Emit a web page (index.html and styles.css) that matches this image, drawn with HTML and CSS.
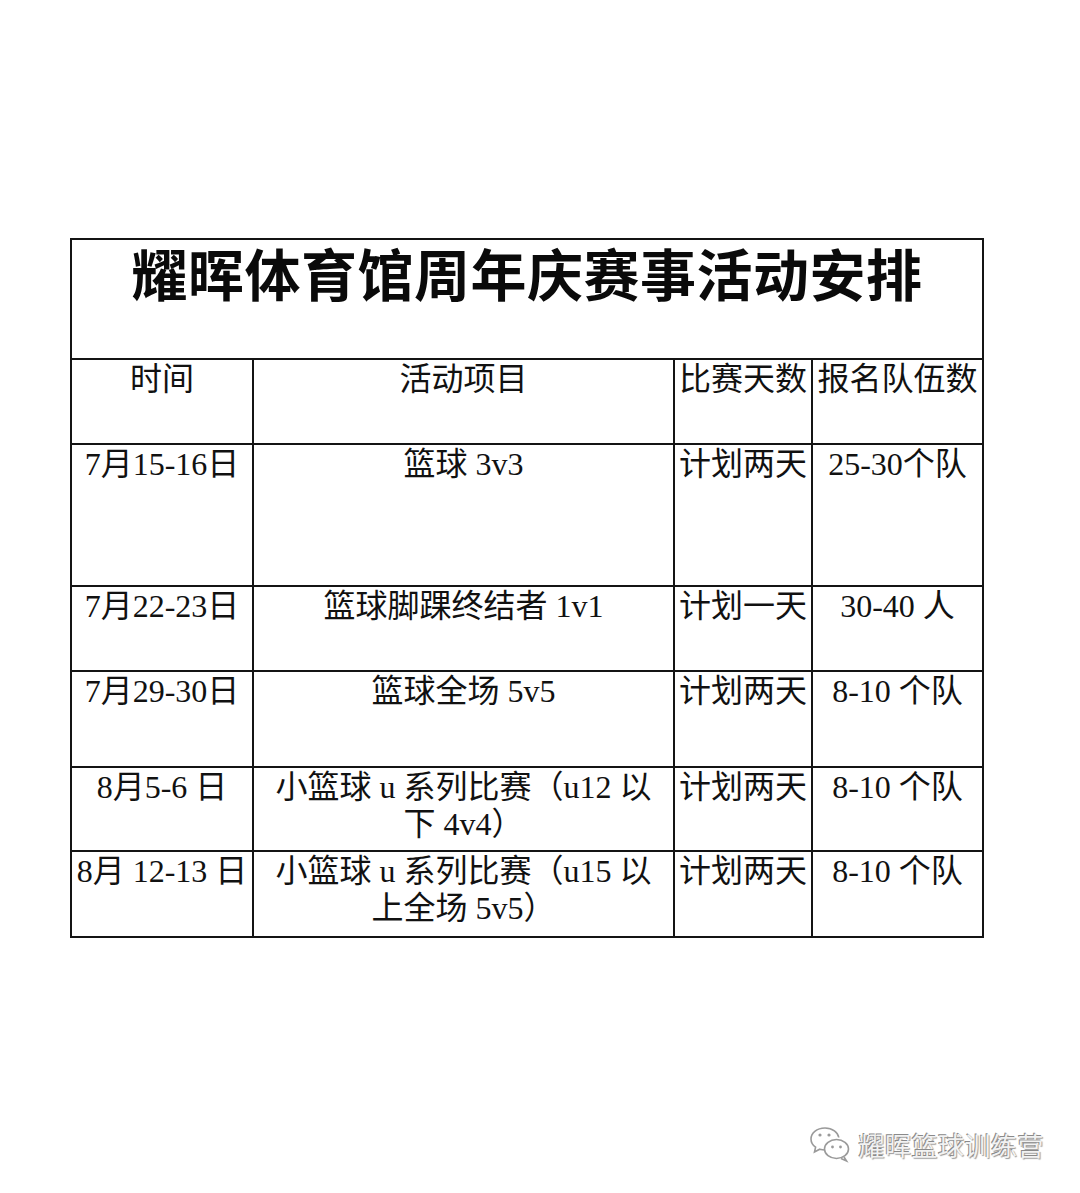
FILE: index.html
```html
<!DOCTYPE html>
<html lang="zh">
<head>
<meta charset="utf-8">
<link rel="stylesheet" href="styles.css">
</head>
<body>
<div class="page">
  <table class="schedule">
    <colgroup>
      <col class="c1"><col class="c2"><col class="c3"><col class="c4">
    </colgroup>
    <tr class="r-title"><td colspan="4" class="title">耀晖体育馆周年庆赛事活动安排</td></tr>
    <tr class="r-head"><td>时间</td><td>活动项目</td><td class="tight">比赛天数</td><td class="tight">报名队伍数</td></tr>
    <tr class="r1"><td>7月15-16日</td><td>篮球 3v3</td><td class="tight">计划两天</td><td>25-30个队</td></tr>
    <tr class="r2"><td>7月22-23日</td><td>篮球脚踝终结者 1v1</td><td class="tight">计划一天</td><td>30-40 人</td></tr>
    <tr class="r3"><td>7月29-30日</td><td>篮球全场 5v5</td><td class="tight">计划两天</td><td>8-10 个队</td></tr>
    <tr class="r4"><td>8月5-6 日</td><td>小篮球 u 系列比赛（u12 以<br>下 4v4）</td><td class="tight">计划两天</td><td>8-10 个队</td></tr>
    <tr class="r5"><td class="tight">8月 12-13 日</td><td>小篮球 u 系列比赛（u15 以<br>上全场 5v5）</td><td class="tight">计划两天</td><td>8-10 个队</td></tr>
  </table>
  <div class="mark">
    <svg class="wx" width="44" height="38" viewBox="0 0 44 38">
      <g fill="none" stroke="#9a9a9a" stroke-width="1.6">
        <path d="M17 3C8.5 3 3 8.3 3 14c0 3.3 1.8 6.2 4.6 8.2L6.5 27l5.2-2.8c1.7.5 3.5.8 5.3.8"/>
        <path d="M17 3c7.5 0 13 4.3 13.8 9.5"/>
        <ellipse cx="28.5" cy="24" rx="12" ry="9.5"/>
        <path d="M36 32l2.5 4-5.5-2.5"/>
      </g>
      <g fill="#9a9a9a">
        <circle cx="12" cy="10" r="1.6"/><circle cx="21" cy="10" r="1.6"/>
        <circle cx="24.5" cy="22" r="1.4"/><circle cx="32.5" cy="22" r="1.4"/>
      </g>
    </svg>
    <span class="mark-text">耀晖篮球训练营</span>
  </div>
</div>
</body>
</html>
```
FILE: styles.css
```css
html, body {
  margin: 0;
  padding: 0;
  background: #ffffff;
}
.page {
  width: 1080px;
  height: 1193px;
  padding-top: 238px;
  box-sizing: border-box;
  font-family: "Liberation Serif", "Noto Sans CJK SC", serif;
  color: #111111;
}
.schedule {
  margin-left: 70px;
  width: 912px;
  border-collapse: collapse;
  table-layout: fixed;
}
.c1 { width: 182px; }
.c2 { width: 421px; }
.c3 { width: 138px; }
.c4 { width: 171px; }
.schedule td {
  border: 2.5px solid #141414;
  vertical-align: top;
  text-align: center;
  font-size: 32px;
  line-height: 37px;
  padding: 1px 2px 0;
  font-weight: 400;
}
.schedule td.tight {
  padding-left: 0;
  padding-right: 0;
  white-space: nowrap;
}
.schedule td.title {
  font-family: "Noto Sans CJK SC", sans-serif;
  font-weight: 700;
  font-size: 56px;
  line-height: 64px;
  padding-top: 0;
  letter-spacing: 0.5px;
  color: #0a0a0a;
}
.r-title { height: 120px; }
.r-head { height: 85px; }
.r1 { height: 142px; }
.r2 { height: 85px; }
.r3 { height: 96px; }
.r4 { height: 84px; }
.r5 { height: 86px; }
.mark {
  display: flex;
  justify-content: flex-end;
  align-items: center;
  gap: 6px;
  margin-top: 187px;
  padding-right: 36px;
}
.wx { display: block; }
.mark-text {
  font-family: "Noto Sans CJK SC", sans-serif;
  font-size: 26px;
  color: #f2f2f2;
  text-shadow: -1px -1px 0 #8a8a8a, 1px 1px 1px #9a9a9a;
  letter-spacing: 0.5px;
}
```
